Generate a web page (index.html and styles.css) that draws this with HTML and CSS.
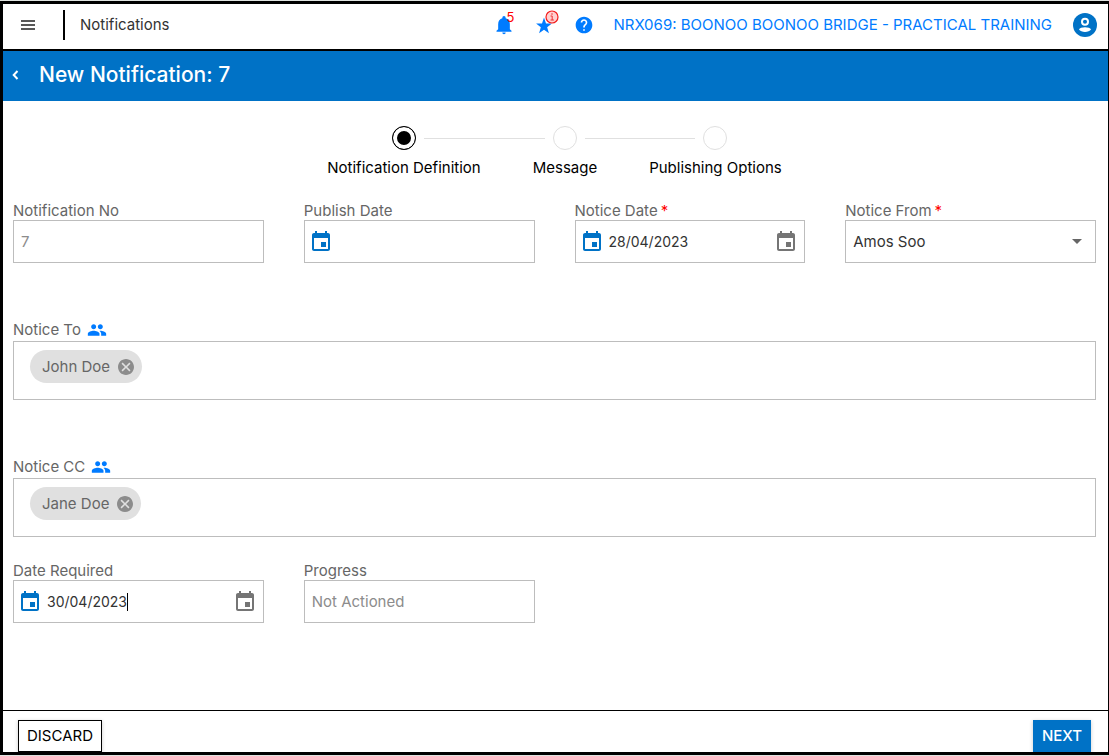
FILE: index.html
```html
<!DOCTYPE html>
<html lang="en">
<head>
<meta charset="utf-8">
<meta name="viewport" content="width=device-width, initial-scale=1">
<title>New Notification: 7</title>
<link rel="stylesheet" href="styles.css">
</head>
<body>
<svg class="symbols" aria-hidden="true">
  <symbol id="calendar" viewBox="0 0 24 24"><path d="M17 12h-5v5h5v-5zM16 1v2H8V1H6v2H5c-1.100 0-2 .9-2 2v14c0 1.100.9 2 2 2h14c1.100 0 2-.9 2-2V5c0-1.100-.9-2-2-2h-1V1h-2zm3 18H5V8h14v11z"/></symbol>
  <symbol id="people" viewBox="0 0 24 24"><path d="M16 11c1.660 0 2.990-1.340 2.990-3S17.660 5 16 5s-3 1.340-3 3 1.340 3 3 3zm-8 0c1.660 0 2.990-1.340 2.990-3S9.660 5 8 5 5 6.340 5 8s1.340 3 3 3zm0 2c-2.330 0-7 1.170-7 3.500V19h14v-2.500C15 14.170 10.330 13 8 13zm8 0c-.29 0-.62.02-.97.05 1.160.84 1.970 1.970 1.970 3.450V19h6v-2.500c0-2.330-4.670-3.500-7-3.500z"/></symbol>
  <symbol id="cancel" viewBox="2 2 20 20"><path d="M12 2C6.470 2 2 6.470 2 12s4.470 10 10 10 10-4.470 10-10S17.530 2 12 2zm5.600 14.200L16.200 17.600 12 13.400 7.800 17.600 6.400 16.200 10.600 12 6.400 7.800 7.800 6.400 12 10.600 16.200 6.400 17.600 7.800 13.400 12z"/></symbol>
</svg>
<div class="app">
  <header class="topbar">
    <button class="icon-btn menu" type="button" aria-label="Menu">
      <svg width="14" height="11" viewBox="0 0 14 11"><path d="M0 1h14M0 5h14M0 9h14" stroke="#222" stroke-width="1.300"/></svg>
    </button>
    <span class="divider"></span>
    <span class="section">Notifications</span>
    <div class="tools">
      <button class="icon-btn tool" type="button" aria-label="Alerts">
        <svg width="20" height="20" viewBox="0 0 24 24"><path d="M12 23c1.100 0 2-.9 2-2h-4c0 1.100.9 2 2 2zm7-6v-6c0-3.500-2-6.200-5-7V3.300a2 2 0 0 0-4 0V4c-3 .8-5 3.500-5 7v6l-2 2v1h18v-1l-2-2z"/></svg>
        <span class="count">5</span>
      </button>
      <button class="icon-btn tool" type="button" aria-label="Favourites">
        <svg width="20" height="20" viewBox="0 0 24 24"><path d="M12 17.800l5.900 4.200-2.100-7.200L21.500 10.300h-7.100L12 3 9.600 10.300H2.500L8.200 14.800 6.100 22z"/></svg>
        <svg class="info" width="14" height="14" viewBox="0 0 14 14"><circle cx="7" cy="7" r="6" fill="#ffd0d0" stroke="#f31d1d" stroke-width="1.200"/><path d="M5.500 6H7.200V10M5.500 10h3.400" stroke="#e33" stroke-width="1" fill="none"/><circle cx="7" cy="4" r=".8" fill="#e33"/></svg>
      </button>
      <button class="icon-btn tool" type="button" aria-label="Help">
        <svg width="20" height="20" viewBox="0 0 24 24"><path d="M12 2C6.480 2 2 6.480 2 12s4.480 10 10 10 10-4.480 10-10S17.520 2 12 2zm1 17h-2v-2h2v2zm2.070-7.750l-.9.920C13.450 12.900 13 13.500 13 15h-2v-.5c0-1.100.45-2.100 1.170-2.830l1.240-1.260c.37-.36.59-.86.59-1.410 0-1.100-.9-2-2-2s-2 .9-2 2H8c0-2.210 1.790-4 4-4s4 1.790 4 4c0 .88-.36 1.680-.93 2.250z"/></svg>
      </button>
      <a class="project" href="#">NRX069: BOONOO BOONOO BRIDGE - PRACTICAL TRAINING</a>
    </div>
    <button class="icon-btn avatar" type="button" aria-label="Account">
      <svg width="24" height="24" viewBox="0 0 24 24"><circle cx="12" cy="12" r="12" fill="#0072c6"/><circle cx="12" cy="8.700" r="3" fill="none" stroke="#fff" stroke-width="2"/><path d="M6 16.500c1-3 11-3 12 0-2 3.200-10 3.200-12 0z" fill="#fff"/></svg>
    </button>
  </header>

  <div class="titlebar">
    <button class="icon-btn back" type="button" aria-label="Back">
      <svg width="7" height="10" viewBox="0 0 7 10"><path d="M5.500 1L1.700 5l3.800 4" fill="none" stroke="#fff" stroke-width="2"/></svg>
    </button>
    <h1>New Notification: 7</h1>
  </div>

  <main>
    <ol class="stepper">
      <li class="step"><span class="track"><i class="line off"></i><i class="dot active"></i><i class="line"></i></span><span>Notification Definition</span></li>
      <li class="joint" aria-hidden="true"></li>
      <li class="step"><span class="track"><i class="line"></i><i class="dot"></i><i class="line"></i></span><span>Message</span></li>
      <li class="joint" aria-hidden="true"></li>
      <li class="step"><span class="track"><i class="line"></i><i class="dot"></i><i class="line off"></i></span><span>Publishing Options</span></li>
    </ol>

    <form id="notification">
      <div class="row">
        <div class="field">
          <label for="no">Notification No</label>
          <div class="box"><input class="grow muted" id="no" type="text" value="7" readonly></div>
        </div>
        <div class="field">
          <label for="publish">Publish Date</label>
          <div class="box">
            <button class="icon-btn cal" type="button" aria-label="Pick publish date"><svg width="24" height="24"><use href="#calendar"/></svg></button>
            <input class="grow date" id="publish" type="text">
          </div>
        </div>
        <div class="field">
          <label for="notice-date">Notice Date<span class="req">*</span></label>
          <div class="box">
            <button class="icon-btn cal" type="button" aria-label="Pick notice date"><svg width="24" height="24"><use href="#calendar"/></svg></button>
            <input class="grow date" id="notice-date" type="text" value="28/04/2023">
            <button class="icon-btn cal end" type="button" aria-label="Open calendar"><svg width="24" height="24"><use href="#calendar"/></svg></button>
          </div>
        </div>
        <div class="field">
          <label for="from">Notice From<span class="req">*</span></label>
          <div class="box">
            <select class="grow" id="from"><option>Amos Soo</option></select>
            <svg class="arrow" width="10" height="5" viewBox="0 0 10 5"><path d="M0 0h10L5 5z"/></svg>
          </div>
        </div>
      </div>

      <div class="people">
        <label for="to">Notice To <svg width="20" height="20"><use href="#people"/></svg></label>
        <div class="chips">
          <span class="chip">John Doe<button class="icon-btn" type="button" aria-label="Remove John Doe"><svg width="16" height="16"><use href="#cancel"/></svg></button></span>
          <input class="grow" id="to" type="text">
        </div>
      </div>

      <div class="people">
        <label for="cc">Notice CC <svg width="20" height="20"><use href="#people"/></svg></label>
        <div class="chips">
          <span class="chip">Jane Doe<button class="icon-btn" type="button" aria-label="Remove Jane Doe"><svg width="16" height="16"><use href="#cancel"/></svg></button></span>
          <input class="grow" id="cc" type="text">
        </div>
      </div>

      <div class="row last">
        <div class="field">
          <label for="required">Date Required</label>
          <div class="box">
            <button class="icon-btn cal" type="button" aria-label="Pick date required"><svg width="24" height="24"><use href="#calendar"/></svg></button>
            <input class="fit date" id="required" type="text" value="30/04/2023"><span class="caret"></span>
            <button class="icon-btn cal end" type="button" aria-label="Open calendar"><svg width="24" height="24"><use href="#calendar"/></svg></button>
          </div>
        </div>
        <div class="field">
          <label for="progress">Progress</label>
          <div class="box"><input class="grow muted" id="progress" type="text" value="Not Actioned" readonly></div>
        </div>
      </div>
    </form>
  </main>

  <footer>
    <button class="btn" type="button">DISCARD</button>
    <button class="btn primary" type="submit" form="notification">NEXT</button>
  </footer>
</div>
</body>
</html>
```
FILE: styles.css
```css
* { box-sizing: border-box; }

body {
  margin: 0;
  padding: 1px 0;
  min-height: 100vh;
  display: flex;
  background: #dfe3e0;
  color: #000;
  font: 15px/18px Inter, "Open Sans", sans-serif;
}

.symbols { position: absolute; width: 0; height: 0; }
svg { display: block; flex: none; }
input, select, button { font: inherit; color: inherit; }

.icon-btn {
  display: block;
  padding: 0;
  border: 0;
  background: none;
  cursor: pointer;
}

.app {
  flex: 1;
  min-width: 0;
  display: flex;
  flex-direction: column;
  background: #fff;
  border: 3px solid #000;
  border-right-width: 1px;
}

.topbar {
  display: flex;
  align-items: center;
  height: 47px;
  padding: 0 11px 3px 18px;
  border-bottom: 2px solid #000;
}
.divider { width: 2px; height: 30px; margin: 0 15px 0 28px; background: #000; }
.section { color: #333; }
.tools {
  display: flex;
  align-items: center;
  gap: 20px;
  margin: 0 21px 0 auto;
  color: #007bff;
}
.tool { position: relative; }
.tool svg { fill: currentColor; }
.count { position: absolute; top: -5px; left: 12px; color: #f00; font-size: 13px; line-height: 14px; }
.tool .info { position: absolute; top: -5px; left: 11px; }
.project { margin-left: -1px; color: inherit; text-decoration: none; white-space: nowrap; }

.titlebar {
  display: flex;
  align-items: center;
  gap: 20px;
  height: 50px;
  padding: 0 10px 2px 9px;
  background: #0072c6;
  color: #fff;
}
h1 { margin: 0; font-size: 21px; font-weight: 500; line-height: 24px; }

main { flex: 1; padding: 25px 12px 0 10px; }

.stepper {
  display: flex;
  justify-content: center;
  margin: 0 0 25px;
  padding: 0;
  list-style: none;
}
.step { display: flex; flex-direction: column; gap: 9px; }
.track { display: flex; align-items: center; }
.line { flex: 1; height: 1px; background: #e0e0e0; }
.line.off { background: none; }
.joint { width: 52px; height: 1px; margin-top: 12px; background: #e0e0e0; }
.dot { width: 24px; height: 24px; margin: 0 8px; border: 1px solid #e0e0e0; border-radius: 50%; }
.dot.active { border-color: #000; background: #000; box-shadow: inset 0 0 0 4px #fff; }

.row { display: grid; grid-template-columns: repeat(4, 1fr); }
.field { min-width: 0; padding: 0 20px; }
.field:first-child { padding-left: 0; }
.field:nth-child(4) { padding-right: 0; }
label { display: flex; align-items: center; color: #666; }
.req { margin-left: 3px; color: #f00; }

.box {
  position: relative;
  display: flex;
  align-items: center;
  height: 43px;
  padding: 0 7px;
  border: 1px solid #bdbdbd;
  color: #333;
}
input, select {
  min-width: 0;
  height: 24px;
  margin: 0;
  padding: 0;
  border: 0;
  outline: 0;
  background: none;
}
select { height: 41px; appearance: none; }
.grow { flex: 1; width: 0; }
.fit { field-sizing: content; }
.date { font-size: 14px; }
.muted { color: #8c8c8c; }
.caret { width: 1px; height: 18px; background: #000; }
.cal { margin: 0 5px 0 -3px; fill: #0072c6; }
.cal.end { margin: 0 -1px 0 auto; fill: #757575; }
.arrow { position: absolute; right: 13px; fill: #666; pointer-events: none; }

.people { margin-top: 56px; }
.people label { height: 22px; gap: 6px; }
.people svg { fill: #007bff; }
.chips {
  display: flex;
  align-items: flex-start;
  gap: 8px;
  min-height: 59px;
  padding: 8px 16px;
  border: 1px solid #bdbdbd;
}
.chip {
  display: flex;
  align-items: center;
  gap: 8px;
  height: 33px;
  padding: 0 8px 0 12px;
  border-radius: 17px;
  background: #e0e0e0;
  color: #666;
}
.chips .chip svg { fill: #8c8c8c; }
.last { margin-top: 25px; }

footer {
  display: flex;
  justify-content: space-between;
  padding: 9px 17px 0 15px;
  border-top: 1px solid #000;
}
.btn {
  height: 32px;
  padding: 0 8px;
  border: 1px solid #000;
  background: #fff;
  box-shadow: 0 1px 4px #0003;
  cursor: pointer;
}
.primary { border-color: #0072c6; background: #0072c6; color: #fff; font-weight: 500; }
```
